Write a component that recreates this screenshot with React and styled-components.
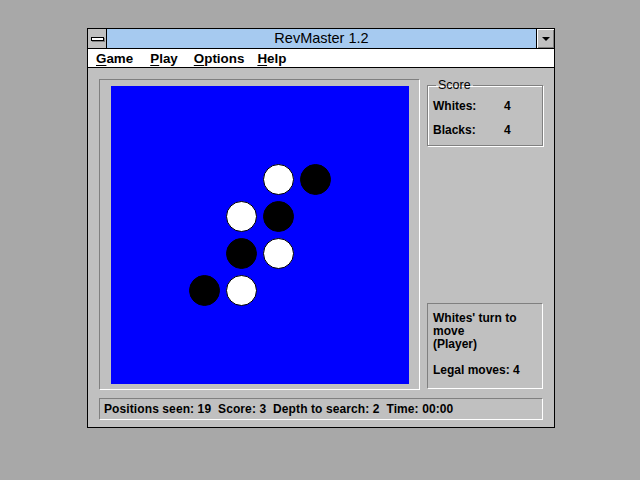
import styled, { createGlobalStyle } from "styled-components";

const GlobalStyle = createGlobalStyle`
  html, body {
    margin: 0;
    padding: 0;
    background: #a8a8a8;
  }
  body {
    font-family: "Liberation Sans", Arial, sans-serif;
    width: 640px;
    height: 480px;
    overflow: hidden;
  }
`;

const Desktop = styled.div`
  padding: 28px 0 0 87px;
`;

const Window = styled.div`
  width: 466px;
  height: 398px;
  border: 1px solid #000;
  background: #c0c0c0;
  display: flex;
  flex-direction: column;
`;

const TitleBar = styled.div`
  height: 19px;
  display: flex;
  border-bottom: 1px solid #000;
  background: #a6caf0;
`;

const SysBox = styled.div`
  width: 18px;
  border-right: 1px solid #000;
  background: #c0c0c0;
  display: flex;
  align-items: center;
  justify-content: center;
  span {
    width: 11px;
    height: 2px;
    background: #fff;
    border: 1px solid #000;
    box-shadow: 1px 1px 0 #808080;
  }
`;

const Title = styled.div`
  flex: 1;
  text-align: center;
  font-size: 14.5px;
  line-height: 19px;
  color: #000;
`;

const MinButton = styled.div`
  width: 17px;
  border-left: 1px solid #000;
  background: #c0c0c0;
  box-shadow: inset 1px 1px 0 #fff, inset -1px -1px 0 #808080;
  display: flex;
  align-items: center;
  justify-content: center;
  span {
    width: 0;
    height: 0;
    border-left: 4px solid transparent;
    border-right: 4px solid transparent;
    border-top: 4px solid #000;
    margin-top: 1px;
  }
`;

const MenuBar = styled.div`
  height: 18px;
  display: flex;
  align-items: center;
  padding-left: 8px;
  background: #fff;
  border-bottom: 1px solid #000;
`;

const MenuItem = styled.div`
  font-size: 13.4px;
  font-weight: bold;
  color: #000;
  margin-right: ${(p) => p.$gap || 16}px;
  u {
    text-decoration: underline;
    text-underline-offset: 2px;
  }
`;

const Client = styled.div`
  flex: 1;
  display: grid;
  grid-template-columns: 321px 116px;
  grid-template-rows: 311px 22px;
  column-gap: 7px;
  row-gap: 8px;
  padding: 11px 10px 6px 11px;
`;

const BoardFrame = styled.div`
  border-top: 1px solid #808080;
  border-left: 1px solid #808080;
  border-bottom: 1px solid #fff;
  border-right: 1px solid #fff;
  padding: 6px 10px 5px 11px;
`;

const Board = styled.div`
  width: 298px;
  height: 298px;
  background: #0000ff;
  display: grid;
  grid-template-columns: repeat(8, 1fr);
  grid-template-rows: repeat(8, 1fr);
`;

const Cell = styled.div`
  display: flex;
  align-items: center;
  justify-content: center;
`;

const Disc = styled.div`
  width: 31px;
  height: 31px;
  box-sizing: border-box;
  border-radius: 50%;
  border: 1px solid #000;
  background: ${(p) => (p.$white ? "#fff" : "#000")};
`;

const SidePanel = styled.div`
  display: flex;
  flex-direction: column;
  justify-content: space-between;
  padding-bottom: 1px;
`;

const ScoreGroup = styled.fieldset`
  margin: 0;
  height: 67px;
  box-sizing: border-box;
  padding: 8px 5px 0 5px;
  border: 1px solid #808080;
  box-shadow: 1px 1px 0 #fff, inset 1px 1px 0 #fff;
  legend {
    font-size: 12.5px;
    padding: 0 2px;
    margin-left: 3px;
    color: #000;
    line-height: 12px;
  }
`;

const ScoreRow = styled.div`
  display: flex;
  font-size: 12px;
  font-weight: bold;
  height: 24px;
  line-height: 14px;
  span:first-child {
    width: 71px;
  }
`;

const TurnBox = styled.div`
  height: 86px;
  box-sizing: border-box;
  border-top: 1px solid #808080;
  border-left: 1px solid #808080;
  border-bottom: 1px solid #fff;
  border-right: 1px solid #fff;
  padding: 8px 5px 0 5px;
  font-size: 12px;
  font-weight: bold;
  line-height: 13px;
  p {
    margin: 0;
  }
`;

const StatusBar = styled.div`
  grid-column: 1 / 3;
  border-top: 1px solid #808080;
  border-left: 1px solid #808080;
  border-bottom: 1px solid #fff;
  border-right: 1px solid #fff;
  padding-left: 4px;
  font-size: 12px;
  font-weight: bold;
  letter-spacing: 0.1px;
  line-height: 20px;
  white-space: pre;
`;

const pieces = {
  "2-4": "w",
  "2-5": "b",
  "3-3": "w",
  "3-4": "b",
  "4-3": "b",
  "4-4": "w",
  "5-2": "b",
  "5-3": "w",
};

export default function App() {
  const cells = [];
  for (let r = 0; r < 8; r++) {
    for (let c = 0; c < 8; c++) {
      const p = pieces[`${r}-${c}`];
      cells.push(
        <Cell key={`${r}-${c}`}>{p && <Disc $white={p === "w"} />}</Cell>
      );
    }
  }

  return (
    <>
      <GlobalStyle />
      <Desktop>
        <Window>
          <TitleBar>
            <SysBox>
              <span />
            </SysBox>
            <Title>RevMaster 1.2</Title>
            <MinButton>
              <span />
            </MinButton>
          </TitleBar>
          <MenuBar>
            <MenuItem $gap={17}>
              <u>G</u>ame
            </MenuItem>
            <MenuItem $gap={16}>
              <u>P</u>lay
            </MenuItem>
            <MenuItem $gap={13}>
              <u>O</u>ptions
            </MenuItem>
            <MenuItem>
              <u>H</u>elp
            </MenuItem>
          </MenuBar>
          <Client>
            <BoardFrame>
              <Board>{cells}</Board>
            </BoardFrame>
            <SidePanel>
              <ScoreGroup>
                <legend>Score</legend>
                <ScoreRow>
                  <span>Whites:</span>
                  <span>4</span>
                </ScoreRow>
                <ScoreRow>
                  <span>Blacks:</span>
                  <span>4</span>
                </ScoreRow>
              </ScoreGroup>
              <TurnBox>
                <p>Whites' turn to move</p>
                <p>(Player)</p>
                <p>&nbsp;</p>
                <p>Legal moves: 4</p>
              </TurnBox>
            </SidePanel>
            <StatusBar>
              {"Positions seen: 19  Score: 3  Depth to search: 2  Time: 00:00"}
            </StatusBar>
          </Client>
        </Window>
      </Desktop>
    </>
  );
}
